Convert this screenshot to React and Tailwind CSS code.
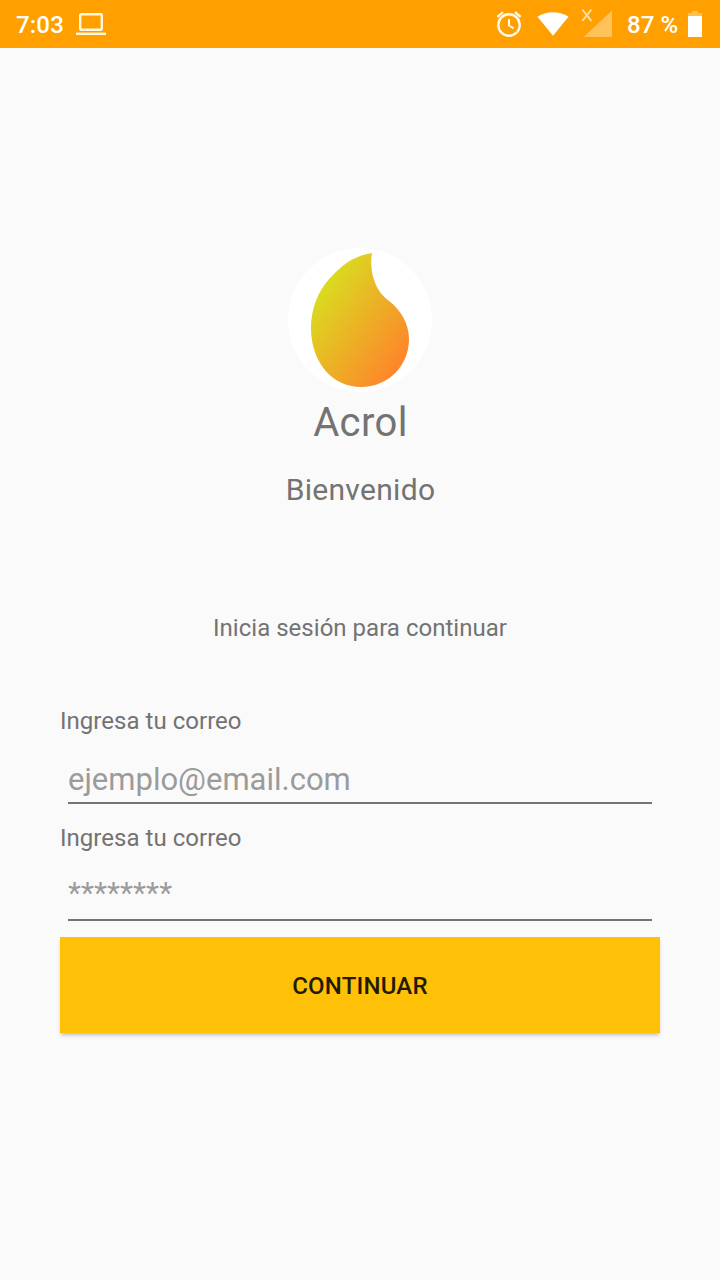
function StatusBar() {
  return (
    <header className="flex h-12 items-center bg-[#ffa000] pl-4 pr-[18px] text-2xl font-medium text-white">
      <span className="mt-px h-8 w-[48px] whitespace-nowrap leading-8 tracking-[0.2px]">7:03</span>
      <svg className="ml-3 h-6 w-[30px]" viewBox="0 0 30 24" fill="none" stroke="#fff9df" strokeWidth="2.4">
        <rect x="4.2" y="2.2" width="21.6" height="15.6" rx="1" />
        <path d="M0 21.8H30" />
      </svg>
      <div className="ml-auto flex items-center">
        <svg className="h-7 w-7" viewBox="0 0 28 28" fill="none" stroke="#fff9e6" strokeWidth="2.4">
          <circle cx="14" cy="15" r="10.7" />
          <path d="M14 9V15.5L18.6 18.3" strokeWidth="2" />
          <path d="M2.4 6.9L8 2.2M25.6 6.9L20 2.2" />
        </svg>
        <svg className="ml-3.5 h-6 w-8" viewBox="0 0 32 24" fill="#fff">
          <path d="M.5 4.7C9-1.3 23-1.3 31.5 4.7L16 23.7Z" />
        </svg>
        <svg className="ml-3 h-8 w-8" viewBox="0 0 32 32">
          <path d="M31 2.5V29H2.5Z" fill="#ffc159" />
          <path d="M0 0H13.5L8 15H0Z" fill="#ffa000" />
          <path d="M1.3 1.5L10.4 13M10.4 1.5L1.3 13" stroke="#ffe2a8" strokeWidth="2" />
        </svg>
        <span className="ml-[14px] mt-px h-8 w-[52px] whitespace-nowrap leading-8 tracking-[0.1px]">87 %</span>
        <svg className="ml-[9px] h-[26px] w-[14px]" viewBox="0 0 14 26">
          <path d="M4 0H10V2H14V6H0V2H4Z" fill="#ffc04d" />
          <path d="M0 5H14V26H0Z" fill="#fff" />
        </svg>
      </div>
    </header>
  );
}

function Logo() {
  return (
    <svg className="mt-[200px] h-36 w-36 shrink-0" viewBox="0 0 144 144">
      <defs>
        <linearGradient id="flame" gradientUnits="userSpaceOnUse" x1="26" y1="46" x2="120" y2="112">
          <stop offset="0" stopColor="#d9dd20" />
          <stop offset="1" stopColor="#ff832b" />
        </linearGradient>
      </defs>
      <circle cx="72" cy="72" r="72" fill="#fff" />
      <path
        d="M84 5C66 8 55 16 42 30C29 44 23 62 23 80C23 114 44 139 73 139C100 139 121 118 121 91C121 76 113 62 101 53C87 43 81 24 84 5Z"
        fill="url(#flame)"
      />
    </svg>
  );
}

function Field({ label, placeholder, type, inputClass }) {
  return (
    <label className="block h-[117px]">
      <span className="block h-8 text-2xl leading-8 tracking-[0.03px]">{label}</span>
      <span className="mx-2 mt-[21px] block h-[46px] border-b-2 border-[#737373]">
        <input
          type={type}
          placeholder={placeholder}
          className={`block w-full bg-transparent outline-none placeholder:text-[#9b9b9b] ${inputClass}`}
        />
      </span>
    </label>
  );
}

export default function App() {
  return (
    <div className="flex h-[1280px] w-[720px] flex-col overflow-hidden bg-[#fafafa] font-['Roboto',sans-serif] text-[#737373]">
      <StatusBar />
      <main className="flex flex-col items-center">
        <Logo />
        <h1 className="mt-[3px] h-14 pl-px text-[40px] leading-[56px] tracking-[0.4px]">Acrol</h1>
        <h2 className="mt-[19px] h-10 pl-px text-[30px] leading-10 tracking-[0.3px]">Bienvenido</h2>
        <p className="mt-[102px] h-8 text-2xl leading-8 tracking-[0.02px]">Inicia sesión para continuar</p>
        <form className="mt-[61px] w-[600px]">
          <Field
            label="Ingresa tu correo"
            placeholder="ejemplo@email.com"
            type="email"
            inputClass="h-[41px] pt-px text-[31px] leading-10"
          />
          <Field
            label="Ingresa tu correo"
            placeholder="********"
            type="password"
            inputClass="h-9 text-[30px] leading-9 tracking-[0.1px]"
          />
          <button
            type="button"
            className="-mt-[2px] block h-24 w-full bg-[#ffc107] pt-[2px] text-2xl font-medium tracking-[0.2px] text-[#221a01] shadow-[0_3px_4px_-1px_rgba(0,0,0,0.26)]"
          >
            CONTINUAR
          </button>
        </form>
      </main>
    </div>
  );
}
